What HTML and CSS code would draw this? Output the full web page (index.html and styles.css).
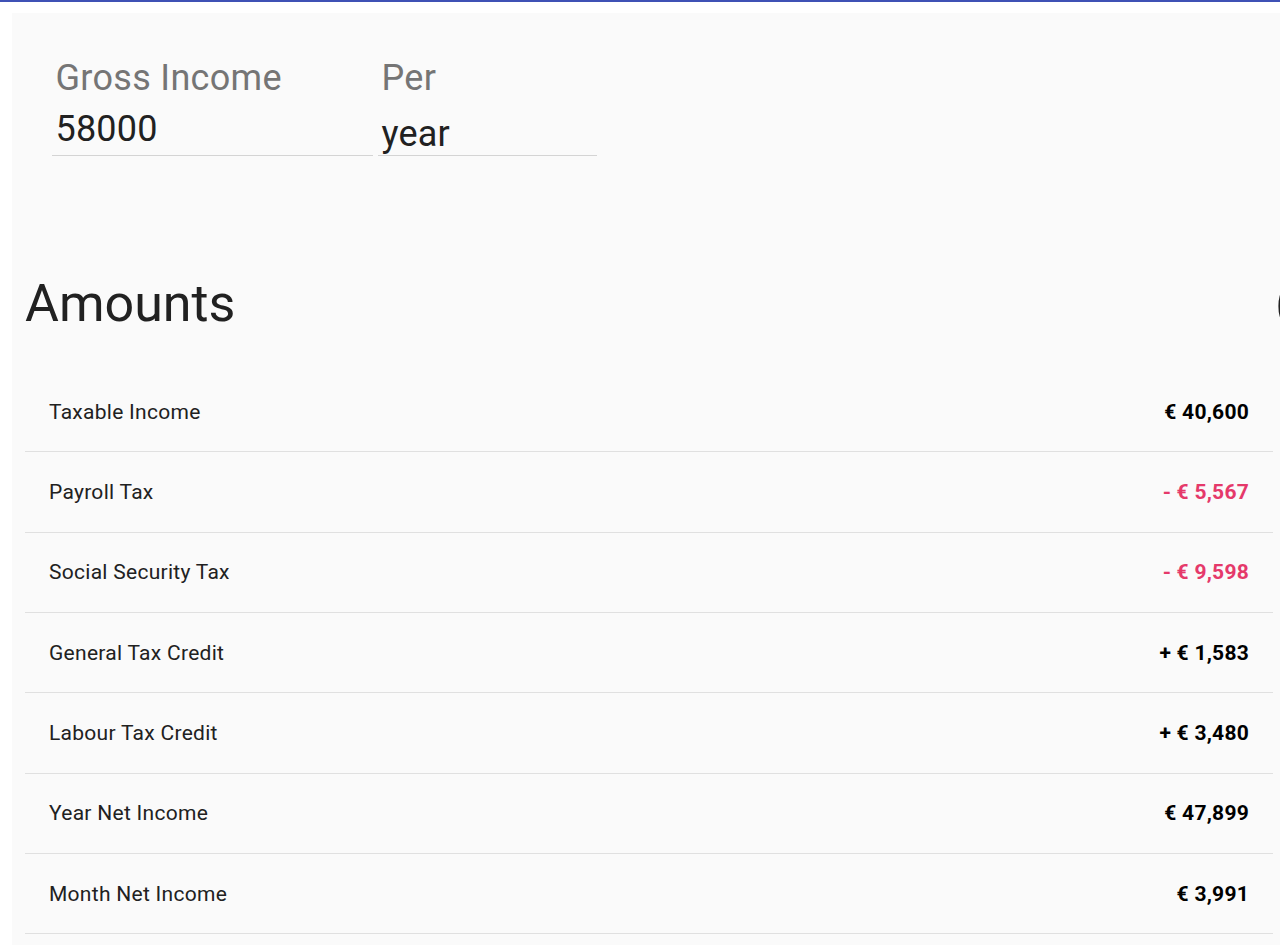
FILE: index.html
```html
<!DOCTYPE html>
<html lang="en">
<head>
<meta charset="utf-8">
<title>Net Income Calculator</title>
<link rel="stylesheet" href="styles.css">
</head>
<body>
<div class="topbar"></div>
<main class="page">
  <section class="card">
    <form class="inputs">
      <div class="field field-income">
        <label class="field-label">Gross Income</label>
        <div class="field-value">58000</div>
      </div>
      <div class="field field-per">
        <label class="field-label">Per</label>
        <div class="field-value field-select">year</div>
      </div>
    </form>

    <div class="section-head">
      <h2 class="section-title">Amounts</h2>
      <span class="section-aside">(€)</span>
    </div>

    <div class="amounts">
      <div class="row"><span class="row-label">Taxable Income</span><span class="row-value">€ 40,600</span></div>
      <div class="row"><span class="row-label">Payroll Tax</span><span class="row-value neg">- € 5,567</span></div>
      <div class="row"><span class="row-label">Social Security Tax</span><span class="row-value neg">- € 9,598</span></div>
      <div class="row"><span class="row-label">General Tax Credit</span><span class="row-value">+ € 1,583</span></div>
      <div class="row"><span class="row-label">Labour Tax Credit</span><span class="row-value">+ € 3,480</span></div>
      <div class="row"><span class="row-label">Year Net Income</span><span class="row-value">€ 47,899</span></div>
      <div class="row"><span class="row-label">Month Net Income</span><span class="row-value">€ 3,991</span></div>
    </div>
  </section>
</main>
</body>
</html>
```

FILE: styles.css
```css
html, body {
  margin: 0;
  padding: 0;
  height: 945px;
  overflow: hidden;
  background: #ffffff;
  font-family: Roboto, "Noto Sans", "Liberation Sans", sans-serif;
}

.topbar {
  height: 2px;
  background: #3f51b5;
}

.page {
  padding: 11px 0 0 12px;
}

.card {
  background: #fafafa;
  min-height: 932px;
  padding-top: 45px;
  box-sizing: border-box;
}

.inputs {
  display: flex;
  gap: 5px;
  padding-left: 40px;
  margin: 0;
}

.field {
  display: flex;
  flex-direction: column;
  box-sizing: border-box;
  padding: 0 3px 0 3.5px;
  border-bottom: 1px solid #d4d4d4;
}

.field-income {
  width: 321px;
}

.field-per {
  width: 219px;
}

.field-label {
  font-size: 36px;
  line-height: 40px;
  letter-spacing: 0.3px;
  color: #757575;
}

.field-value {
  font-size: 36px;
  line-height: 40px;
  letter-spacing: 0.2px;
  color: #212121;
  margin-top: 11px;
  margin-bottom: 6px;
}

.field-select {
  padding-top: 5px;
  margin-bottom: 1px;
}

.section-head {
  display: flex;
  align-items: baseline;
  margin: 117px 0 0 13px;
  white-space: nowrap;
}

.section-title {
  flex: 0 0 1250px;
  margin: 0;
  font-size: 52px;
  line-height: 62px;
  font-weight: 400;
  color: #212121;
}

.section-aside {
  font-size: 52px;
  line-height: 62px;
  color: #212121;
}

.amounts {
  margin: 37px 7px 0 13px;
}

.row {
  display: flex;
  justify-content: space-between;
  align-items: center;
  height: 80.33px;
  box-sizing: border-box;
  padding: 0 24px;
  border-bottom: 1px solid #e0e0e0;
}

.row-label {
  font-size: 21px;
  letter-spacing: 0.28px;
  color: #212121;
}

.row-value {
  font-size: 21px;
  font-weight: 700;
  letter-spacing: 0.25px;
  color: #000000;
}

.row-value.neg {
  color: #e5396a;
}
```
